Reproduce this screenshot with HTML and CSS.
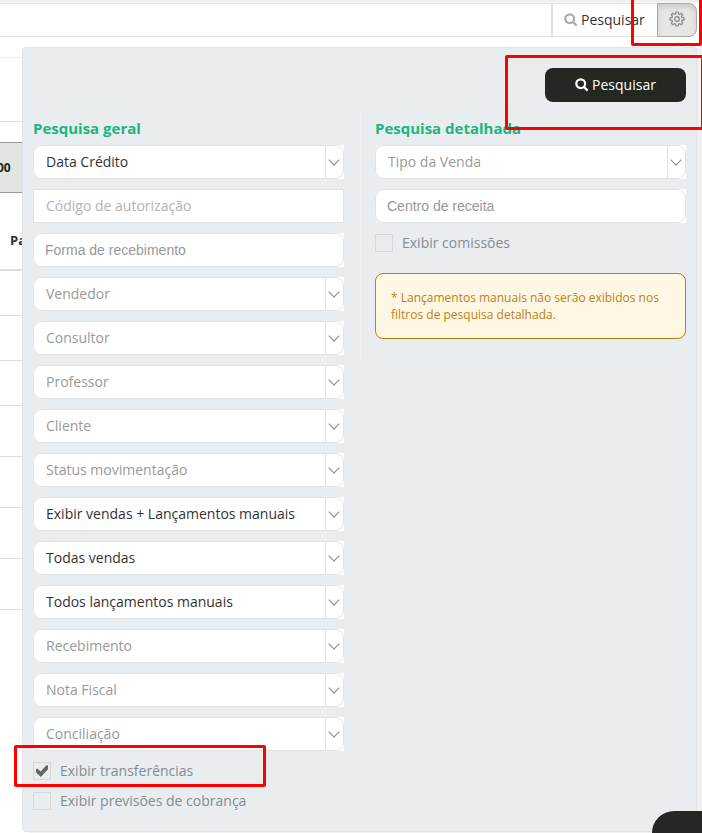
FILE: index.html
```html
<!DOCTYPE html>
<html lang="pt-BR">
  <head>
    <meta charset="UTF-8" />
    <title>Movimentações</title>
    <link rel="stylesheet" href="styles.css">
  </head>
  <body>
    <div class="topbar">
      <input type="text" class="topbar-input" aria-label="Busca" />
      <button type="button" class="topbar-search">
        <svg class="icon" viewBox="0 0 14 14"><circle cx="5.7" cy="5.7" r="4.4" /><path d="M9 9l3.6 3.6" /></svg>
        Pesquisar
      </button>
      <button type="button" class="topbar-gear" aria-label="Filtros">
        <svg class="gear" viewBox="0 0 16 16">
          <path d="M6.9 1h2.2l.3 1.9 1.2.5 1.6-1.1 1.5 1.5-1.1 1.6.5 1.2 1.9.3v2.2l-1.9.3-.5 1.2 1.1 1.6-1.5 1.5-1.6-1.1-1.2.5-.3 1.9H6.9l-.3-1.9-1.2-.5-1.6 1.1-1.5-1.5 1.1-1.6-.5-1.2L1 9.1V6.900l1.900-.3.5-1.200-1.100-1.600 1.500-1.500 1.600 1.100 1.200-.5z" />
          <circle cx="8" cy="8" r="2.300" />
        </svg>
      </button>
    </div>

    <div class="content">
      <div class="content-head"></div>
      <div class="total-row">00</div>
      <table class="listing">
        <thead>
          <tr><th>Parcela</th></tr>
        </thead>
        <tbody>
          <tr><td></td></tr>
          <tr><td></td></tr>
          <tr><td></td></tr>
          <tr class="tall"><td></td></tr>
          <tr class="tall"><td></td></tr>
          <tr class="tall"><td></td></tr>
          <tr class="tall"><td></td></tr>
        </tbody>
      </table>
    </div>

    <form class="panel">
      <div class="panel-actions">
        <button type="button" class="btn-search">
          <svg class="icon" viewBox="0 0 14 14"><circle cx="5.7" cy="5.7" r="4.4" /><path d="M9 9l3.6 3.6" /></svg>
          Pesquisar
        </button>
      </div>
      <div class="columns">
        <div class="column general">
          <h2>Pesquisa geral</h2>
          <div class="box select filled"><select aria-label="Data"><option>Data Crédito</option></select></div>
          <div class="box square"><input type="text" placeholder="Código de autorização" aria-label="Código de autorização" /></div>
          <div class="box"><input type="text" placeholder="Forma de recebimento" aria-label="Forma de recebimento" /></div>
          <div class="box select"><select aria-label="Vendedor"><option>Vendedor</option></select></div>
          <div class="box select"><select aria-label="Consultor"><option>Consultor</option></select></div>
          <div class="box select"><select aria-label="Professor"><option>Professor</option></select></div>
          <div class="box select"><select aria-label="Cliente"><option>Cliente</option></select></div>
          <div class="box select"><select aria-label="Status movimentação"><option>Status movimentação</option></select></div>
          <div class="box select filled"><select aria-label="Exibir"><option>Exibir vendas + Lançamentos manuais</option></select></div>
          <div class="box select filled"><select aria-label="Vendas"><option>Todas vendas</option></select></div>
          <div class="box select filled"><select aria-label="Lançamentos"><option>Todos lançamentos manuais</option></select></div>
          <div class="box select"><select aria-label="Recebimento"><option>Recebimento</option></select></div>
          <div class="box select"><select aria-label="Nota Fiscal"><option>Nota Fiscal</option></select></div>
          <div class="box select"><select aria-label="Conciliação"><option>Conciliação</option></select></div>
          <div class="check">
            <input type="checkbox" id="transferencias" checked />
            <label for="transferencias">Exibir transferências</label>
          </div>
          <div class="check">
            <input type="checkbox" id="previsoes" />
            <label for="previsoes">Exibir previsões de cobrança</label>
          </div>
        </div>
        <div class="column detailed">
          <h2>Pesquisa detalhada</h2>
          <div class="box select"><select aria-label="Tipo da Venda"><option>Tipo da Venda</option></select></div>
          <div class="box"><input type="text" placeholder="Centro de receita" aria-label="Centro de receita" /></div>
          <div class="check">
            <input type="checkbox" id="comissoes" />
            <label for="comissoes">Exibir comissões</label>
          </div>
          <p class="notice">* Lançamentos manuais não serão exibidos nos filtros de pesquisa detalhada.</p>
        </div>
      </div>
    </form>

    <div class="chat-tab"></div>

    <!-- highlights -->
    <div class="mark mark-gear"></div>
    <div class="mark mark-search"></div>
    <div class="mark mark-transfer"></div>
  </body>
</html>
```

FILE: styles.css
```css
* {
  box-sizing: border-box;
}

body {
  margin: 0;
  position: relative;
  min-height: 100vh;
  overflow: hidden;
  background-color: #fff;
  font-family: "Open Sans", sans-serif;
  font-size: 14px;
  color: #333;
}

button,
input,
select {
  font-family: inherit;
  font-size: 14px;
  margin: 0;
}

/* top search bar */
.topbar {
  display: flex;
  height: 37px;
  padding: 3px 5px 0 0;
  background: linear-gradient(#ececec, #f6f6f6 3px, #fff 4px);
}

.topbar-input {
  flex: 1;
  min-width: 0;
  border: 1px solid #e0e0e0;
  border-left: 0;
  background-color: #fff;
}

.topbar-search {
  display: flex;
  align-items: center;
  gap: 3px;
  width: 105px;
  padding: 0 0 2px 11px;
  border: 1px solid #e0e0e0;
  border-width: 1px 0 1px 1px;
  background-color: #fff;
  color: #333;
}

.icon {
  width: 14px;
  height: 14px;
  margin-top: 2px;
  fill: none;
  stroke: currentColor;
  stroke-width: 2.2;
}

.topbar-search .icon {
  color: #aaa;
}

.topbar-gear {
  display: flex;
  align-items: center;
  justify-content: center;
  width: 40px;
  padding: 0 0 2px;
  border: 1px solid #aaa;
  border-radius: 0 8px 8px 0;
  background-color: #e6e6e6;
  box-shadow: inset 0 3px 5px rgba(0, 0, 0, 0.12);
}

.gear {
  width: 16px;
  height: 16px;
  fill: none;
  stroke: #888;
  stroke-width: 1.2;
}

/* page behind the panel */
.content {
  padding-top: 20px;
}

.content-head {
  height: 65px;
  border-top: 1px solid #eee;
  border-bottom: 1px solid #ddd;
}

.total-row {
  height: 51px;
  margin-top: 20px;
  border: 1px solid #999;
  border-width: 1px 0;
  background-color: #e0e5df;
  font-size: 12px;
  font-weight: bold;
  line-height: 49px;
  color: #222;
  text-indent: -3px;
}

.listing {
  width: 100%;
  border-collapse: collapse;
}

.listing th {
  height: 77px;
  padding: 18px 10px 0;
  border-bottom: 2px solid #ddd;
  font-size: 13px;
  text-align: left;
}

.listing td {
  height: 45px;
  padding: 0;
  border-bottom: 1px solid #ddd;
}

.listing .tall td {
  height: 51px;
}

/* filter panel */
.panel {
  position: absolute;
  top: 47px;
  left: 22px;
  right: 5px;
  padding: 20px 10px;
  border: 1px solid #dfe4ea;
  border-radius: 4px;
  background-color: #e9edf0;
  box-shadow: 5px 1px 0 #f0f0f0;
}

.panel::before {
  content: "";
  position: absolute;
  top: -7px;
  right: 11px;
  border: 7px solid transparent;
  border-top: 0;
  border-bottom-color: #eceff1;
}

.panel-actions {
  display: flex;
  justify-content: flex-end;
  margin-bottom: 11px;
}

.btn-search {
  display: flex;
  align-items: center;
  justify-content: center;
  gap: 3px;
  width: 141px;
  height: 34px;
  padding: 0 0 2px;
  border: 0;
  border-radius: 8px;
  background-color: #232823;
  color: #fff;
}

.columns {
  display: grid;
  grid-template-columns: 1fr 1fr;
  column-gap: 1px;
  align-items: start;
}

.column {
  display: flex;
  flex-direction: column;
  gap: 10px;
}

.general {
  padding-right: 15px;
}

.detailed {
  min-height: 247px;
  padding-left: 14px;
  border-left: 1px solid #eff2f4;
}

h2 {
  margin: 4px 0 -4px;
  font-size: 15px;
  line-height: 22px;
  color: #1ab680;
}

.box {
  position: relative;
  height: 34px;
  border-radius: 9px 0 0 9px;
  background-color: #fff;
}

.box input,
.box select {
  appearance: none;
  display: block;
  width: 100%;
  height: 34px;
  padding: 0 11px;
  border: 1px solid #e0e3e6;
  border-radius: 9px;
  background-color: #fff;
}

.box input {
  font-family: "Liberation Sans", sans-serif;
}

.box input::placeholder {
  color: #999;
}

.box select {
  padding: 0 30px 2px 12px;
  color: #999;
}

.filled select {
  color: #333;
}

.select::before {
  content: "";
  position: absolute;
  top: 1px;
  bottom: 1px;
  right: 18px;
  border-left: 1px solid #e0e3e6;
}

.select::after {
  content: "";
  position: absolute;
  top: 11px;
  right: 6px;
  width: 7px;
  height: 7px;
  border: solid #888;
  border-width: 0 1px 1px 0;
  transform: rotate(45deg);
}

.square input {
  padding: 0 12px 2px;
  border-radius: 0;
  font-family: "Open Sans", sans-serif;
}

.square input::placeholder {
  color: #b3b3b3;
}

.check {
  display: flex;
  align-items: center;
  gap: 9px;
  height: 20px;
  color: #858c92;
}

.check label {
  padding-bottom: 1px;
}

.check input {
  appearance: none;
  display: grid;
  place-items: center;
  width: 18px;
  height: 18px;
  border: 1px solid #d6d9db;
}

.check input:checked::before {
  content: "";
  width: 12px;
  height: 12px;
  background-color: #666;
  clip-path: polygon(0 35%, 12% 30%, 38% 55%, 85% 5%, 100% 0, 100% 35%, 40% 100%, 0 60%);
}

.notice {
  margin: 10px 0 0;
  padding: 15px;
  border: 1px solid #bd7f18;
  border-radius: 8px;
  background-color: #fef7e3;
  font-size: 12px;
  line-height: 17px;
  color: #bd7f18;
}

.chat-tab {
  position: absolute;
  right: 0;
  bottom: 0;
  width: 50px;
  height: 22px;
  border-radius: 28px 0 0 0;
  background-color: #232823;
}

/* red highlights */
.mark {
  position: absolute;
  border: 3px solid #f00;
  border-radius: 2px;
}

.mark-gear {
  top: -6px;
  right: 0;
  width: 71px;
  height: 52px;
}

.mark-search {
  top: 55px;
  right: -2px;
  width: 199px;
  height: 75px;
}

.mark-transfer {
  top: 745px;
  left: 14px;
  width: 252px;
  height: 42px;
}
```
